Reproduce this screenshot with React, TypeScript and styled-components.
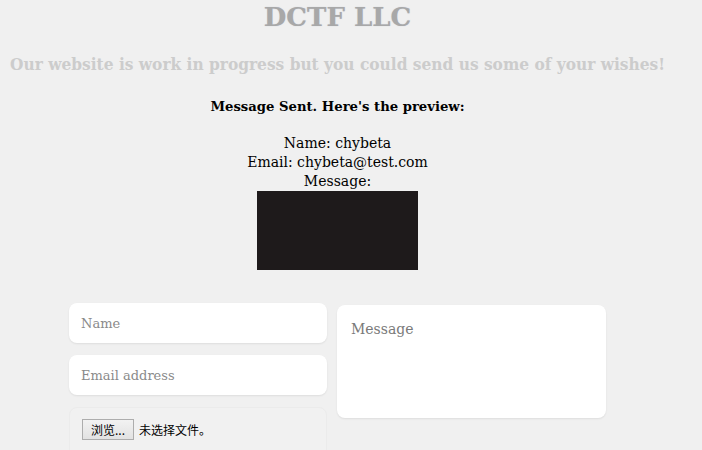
import React from "react";
import styled, { createGlobalStyle } from "styled-components";

const Global = createGlobalStyle`
  html, body { margin: 0; padding: 0; background: #f0f0f0; }
  body { font-family: "DejaVu Serif", "Liberation Serif", serif; overflow: hidden; }
`;

const Page = styled.div`
  width: 675px;
  height: 450px;
  overflow: hidden;
  text-align: center;
`;

const Title = styled.h1`
  margin: 0;
  padding-top: 1px;
  font-size: 26px;
  line-height: 32px;
  font-weight: bold;
  color: #a8a8a8;
  text-shadow: 0 0 1px rgba(120, 130, 170, 0.4);
`;

const Subtitle = styled.h3`
  margin: 19px 0 0;
  font-family: "DejaVu Serif Condensed", "DejaVu Serif", serif;
  font-stretch: condensed;
  font-size: 17.15px;
  line-height: 25px;
  font-weight: bold;
  color: #cccccc;
  white-space: nowrap;
`;

const Preview = styled.div`
  margin-top: 20px;
  font-size: 14px;
  line-height: 19px;
  color: #000;
`;

const PreviewHead = styled.div`
  font-weight: bold;
  font-size: 13.2px;
  margin-bottom: 18px;
`;

const Line = styled.div``;

const Redacted = styled.div`
  width: 161px;
  height: 79px;
  margin: 0 auto;
  background: #1e1a1b;
`;

const Form = styled.form`
  display: flex;
  gap: 10px;
  margin: 33px 69px 0;
  text-align: left;
  align-items: flex-start;
`;

const Col = styled.div`
  display: flex;
  flex-direction: column;
  gap: 12px;
  width: 258px;
`;

const Field = styled.input`
  box-sizing: border-box;
  width: 100%;
  height: 40px;
  border: none;
  border-radius: 8px;
  background: #fff;
  box-shadow: 0 1px 2px rgba(0, 0, 0, 0.08);
  padding: 0 12px;
  font-family: "DejaVu Serif", serif;
  font-size: 13px;
  color: #333;
  outline: none;
  &::placeholder { color: #8a8a8a; }
`;

const Area = styled.textarea`
  box-sizing: border-box;
  width: 269px;
  height: 113px;
  margin-top: 2px;
  border: none;
  border-radius: 8px;
  background: #fff;
  box-shadow: 0 1px 2px rgba(0, 0, 0, 0.08);
  padding: 16px 14px 14px;
  font-family: "DejaVu Serif", serif;
  font-size: 14px;
  resize: none;
  outline: none;
  &::placeholder { color: #7a7a7a; }
`;

const FileBox = styled.div`
  box-sizing: border-box;
  height: 60px;
  border: 1px solid #ebebeb;
  border-radius: 8px;
  background: #f1f1f1;
  padding: 11px 12px;
  display: flex;
  align-self: stretch;
  align-items: flex-start;
  gap: 5px;
  font-family: "Noto Sans CJK SC", sans-serif;
  font-size: 12px;
  color: #000;
`;

const FileButton = styled.span`
  display: inline-block;
  box-sizing: border-box;
  height: 21px;
  padding: 0 8px;
  line-height: 19px;
  border: 1px solid #adadad;
  background: linear-gradient(#f2f2f2, #e2e2e2);
  font-size: 12px;
  color: #000;
`;

const FileText = styled.span`
  line-height: 21px;
`;

export default function App() {
  return (
    <Page>
      <Global />
      <Title>DCTF LLC</Title>
      <Subtitle>Our website is work in progress but you could send us some of your wishes!</Subtitle>
      <Preview>
        <PreviewHead>Message Sent. Here's the preview:</PreviewHead>
        <Line>Name: chybeta</Line>
        <Line>Email: chybeta@test.com</Line>
        <Line>Message:</Line>
        <Redacted />
      </Preview>
      <Form>
        <Col>
          <Field placeholder="Name" />
          <Field placeholder="Email address" />
          <FileBox>
            <FileButton>浏览...</FileButton>
            <FileText>未选择文件。</FileText>
          </FileBox>
        </Col>
        <Area placeholder="Message" />
      </Form>
    </Page>
  );
}
